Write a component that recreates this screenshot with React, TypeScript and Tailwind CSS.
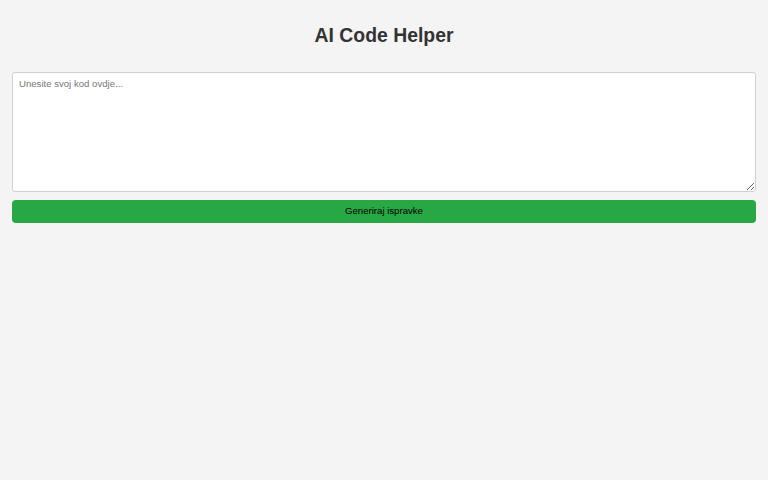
export default function App() {
  return (
    <div className="min-h-[480px] bg-[#f4f4f4] px-[12px] pt-[23px]" style={{ fontFamily: '"Liberation Sans", Arial, sans-serif' }}>
      <h1 className="text-center text-[19.4px] leading-[24px] font-bold text-[#333333]">AI Code Helper</h1>
      <textarea
        className="mt-[25px] block w-full h-[120px] bg-white border border-[#d0d0d0] rounded-[3px] px-[6px] py-[5px] text-[9.6px] leading-[12px] text-[#333] placeholder:text-[#777] outline-none"
        placeholder="Unesite svoj kod ovdje..."
      />
      <button className="mt-[8px] block w-full h-[23px] bg-[#28a745] rounded-[4px] text-[9.6px] text-black">
        Generiraj ispravke
      </button>
    </div>
  );
}
